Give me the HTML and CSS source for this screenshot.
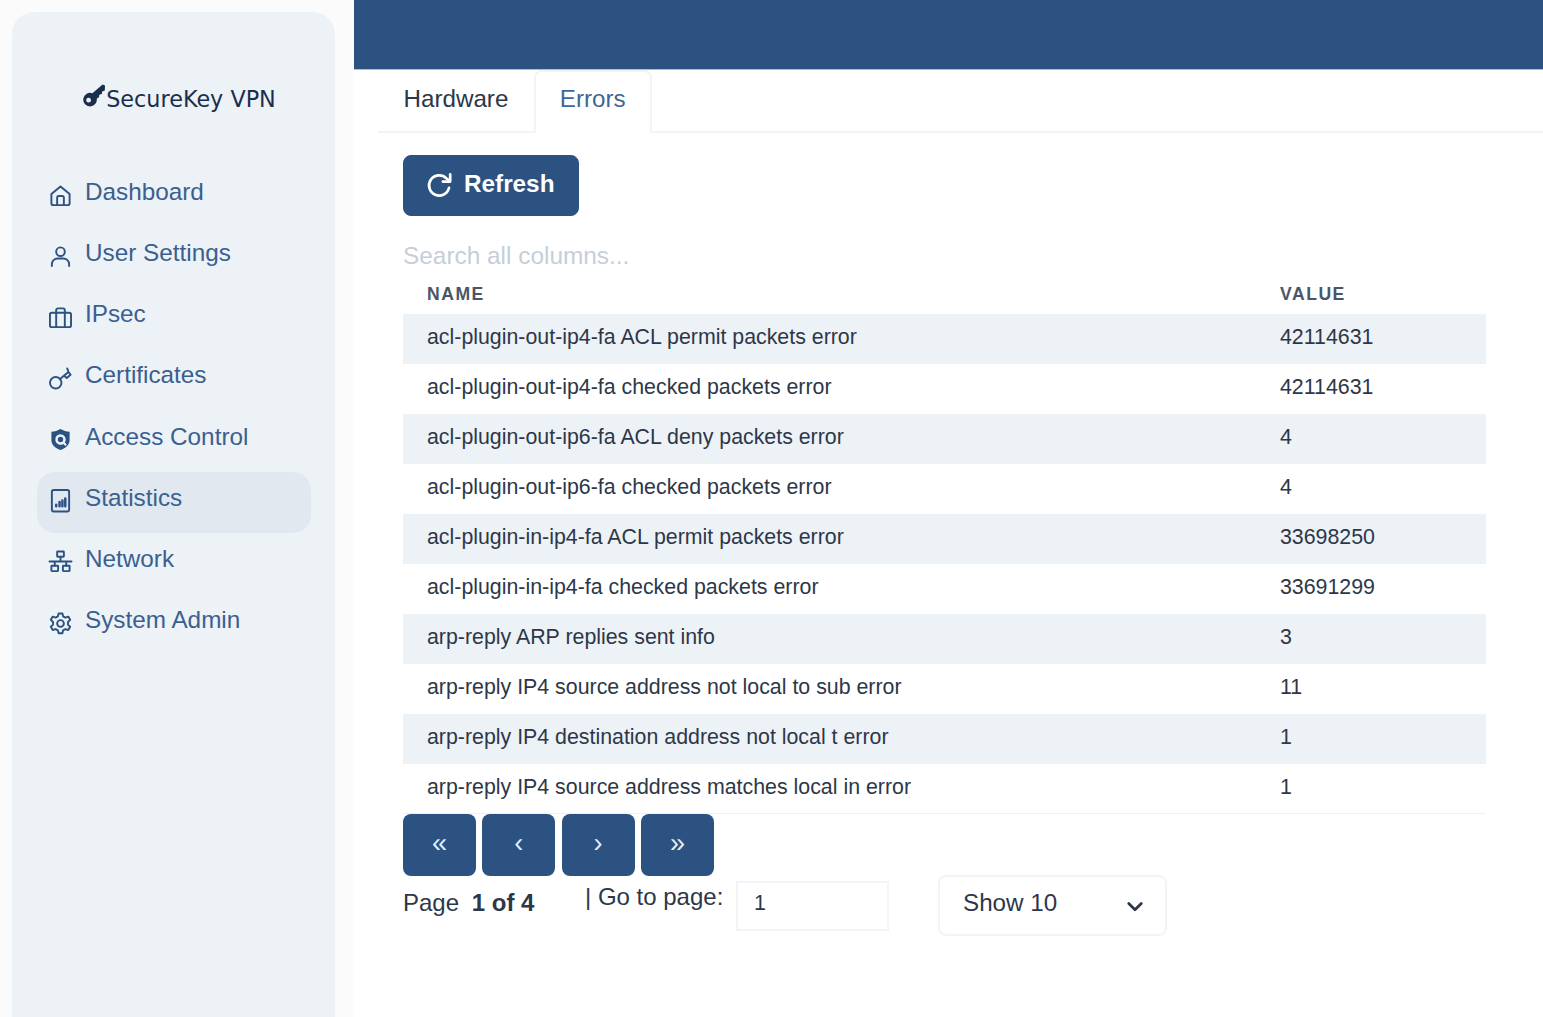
FILE: index.html
```html
<!DOCTYPE html>
<html lang="en">
<head>
    <meta charset="UTF-8">
    <meta name="viewport" content="width=device-width, initial-scale=1.0">
    <title>Statistics - SecureKey VPN</title>
    <link rel="stylesheet" href="styles.css">
</head>
<body>
    <div class="page">
        <div class="sidebar-wrap">
            <aside class="sidebar">
                <div class="logo">
                    <svg class="logo-icon" viewBox="0 0 24 24"><path d="M23 1.500 20.600 .6 10.400 9.200a6.800 6.800 0 1 0 4.400 5.400l2.200-1.300.3-2.600 2.500-.6.4-2.700 2.600-.9zM6.600 18.600a2.400 2.400 0 1 1 0-4.800 2.400 2.400 0 0 1 0 4.800z"/></svg>
                    <span>SecureKey VPN</span>
                </div>
                <nav class="nav">
                    <a class="nav-item" href="#">
                        <svg class="nav-icon" viewBox="0 0 24 24"><path d="M2.500 10.500 12 2.500l9.500 8V20a2 2 0 0 1-2 2h-15a2 2 0 0 1-2-2z"/><path d="M8.500 22v-8a1.500 1.500 0 0 1 1.500-1.500h4a1.500 1.500 0 0 1 1.500 1.500v8"/></svg>
                        <span>Dashboard</span>
                    </a>
                    <a class="nav-item" href="#">
                        <svg class="nav-icon" viewBox="0 0 24 24"><circle cx="12" cy="7" r="4.500"/><path d="M3 22v-2a6 6 0 0 1 6-6h6a6 6 0 0 1 6 6v2"/></svg>
                        <span>User Settings</span>
                    </a>
                    <a class="nav-item" href="#">
                        <svg class="nav-icon" viewBox="0 0 24 24"><rect x="1" y="7" width="22" height="15" rx="2"/><path d="M7.500 22V4.500a2 2 0 0 1 2-2h5a2 2 0 0 1 2 2V22"/></svg>
                        <span>IPsec</span>
                    </a>
                    <a class="nav-item" href="#">
                        <svg class="nav-icon" viewBox="0 0 24 24"><circle cx="7" cy="16.500" r="6"/><path d="M11.500 12.500 20 5.500M16 9.500l2.500 2 4-3.500-2-2.500M19 1.500l1.500 4"/></svg>
                        <span>Certificates</span>
                    </a>
                    <a class="nav-item" href="#">
                        <svg class="nav-icon nav-icon-solid" viewBox="0 0 24 24"><path fill-rule="evenodd" d="M12 1c3 1.800 6 2.600 9.500 2.800v8.700c0 4.800-3.700 8.300-9.500 10.500-5.800-2.200-9.500-5.700-9.500-10.500V3.800C6 3.600 9 2.800 12 1zM12 6.500a5.500 5.500 0 1 0 3 10.100l2.100 2.100 1.500-1.500-2.100-2.100A5.500 5.500 0 0 0 12 6.500zm0 2.700a2.800 2.800 0 1 1 0 5.600 2.800 2.800 0 0 1 0-5.600z"/></svg>
                        <span>Access Control</span>
                    </a>
                    <a class="nav-item nav-item-active" href="#">
                        <svg class="nav-icon" viewBox="0 0 24 24"><rect x="3" y="1" width="18" height="22.500" rx="2"/><path class="bars" d="M7.500 18v-1.500M11 18v-4.500M14 18v-6M17 18v-8"/></svg>
                        <span>Statistics</span>
                    </a>
                    <a class="nav-item" href="#">
                        <svg class="nav-icon" viewBox="0 0 24 24"><rect x="8.500" y="1.500" width="7" height="5.500" rx=".5"/><rect x="2.500" y="16.500" width="7" height="5.500" rx=".5"/><rect x="14.500" y="16.500" width="7" height="5.500" rx=".5"/><path d="M12 7v5M.5 12h23M6 12v4.500M18 12v4.500"/></svg>
                        <span>Network</span>
                    </a>
                    <a class="nav-item" href="#">
                        <svg class="nav-icon" viewBox="0 0 24 24"><circle cx="12" cy="12" r="3.500"/><path d="M10 1.500h4l.7 3 2.400 1.300 3-1 2 3.400-2.300 2.200v2.800l2.300 2.200-2 3.400-3-1-2.400 1.300-.7 3h-4l-.7-3-2.400-1.300-3 1-2-3.400 2.300-2.200v-2.800L1.900 8.200l2-3.400 3 1 2.400-1.300z"/></svg>
                        <span>System Admin</span>
                    </a>
                </nav>
            </aside>
        </div>
        <div class="main">
            <header class="topbar"></header>
            <div class="content">
                <div class="tabs">
                    <div class="tab">Hardware</div>
                    <div class="tab tab-active">Errors</div>
                </div>
                <div class="panel">
                    <button class="refresh" type="button">
                        <svg class="refresh-icon" viewBox="0 0 24 24"><path d="M20.500 14a9 9 0 1 1-2.500-8.500L21 8"/><path d="M21.500 2v6.500H15"/></svg>
                        <span>Refresh</span>
                    </button>
                    <input class="search" type="text" placeholder="Search all columns...">
                    <table class="errors">
                        <thead>
                            <tr><th>Name</th><th class="col-value">Value</th></tr>
                        </thead>
                        <tbody>
                            <tr><td>acl-plugin-out-ip4-fa ACL permit packets error</td><td>42114631</td></tr>
                            <tr><td>acl-plugin-out-ip4-fa checked packets error</td><td>42114631</td></tr>
                            <tr><td>acl-plugin-out-ip6-fa ACL deny packets error</td><td>4</td></tr>
                            <tr><td>acl-plugin-out-ip6-fa checked packets error</td><td>4</td></tr>
                            <tr><td>acl-plugin-in-ip4-fa ACL permit packets error</td><td>33698250</td></tr>
                            <tr><td>acl-plugin-in-ip4-fa checked packets error</td><td>33691299</td></tr>
                            <tr><td>arp-reply ARP replies sent info</td><td>3</td></tr>
                            <tr><td>arp-reply IP4 source address not local to sub error</td><td>11</td></tr>
                            <tr><td>arp-reply IP4 destination address not local t error</td><td>1</td></tr>
                            <tr><td>arp-reply IP4 source address matches local in error</td><td>1</td></tr>
                        </tbody>
                    </table>
                    <div class="pager-buttons">
                        <button class="pager-btn" type="button">«</button>
                        <button class="pager-btn" type="button">‹</button>
                        <button class="pager-btn" type="button">›</button>
                        <button class="pager-btn" type="button">»</button>
                    </div>
                    <div class="pager-row">
                        <div class="page-count">Page <strong>1 of 4</strong></div>
                        <div class="goto">| Go to page:</div>
                        <input class="goto-input" type="text" value="1">
                        <div class="show-select">
                            <span>Show 10</span>
                            <svg class="chevron" viewBox="0 0 16 16"><path d="M3 6l5 5 5-5"/></svg>
                        </div>
                    </div>
                </div>
            </div>
        </div>
    </div>
</body>
</html>
```

FILE: styles.css
```css
* {
    box-sizing: border-box;
}
html, body {
    margin: 0;
    height: 100%;
}
body {
    font-family: "Liberation Sans", Arial, sans-serif;
    color: #2d3748;
    background-color: #ffffff;
    overflow: hidden;
}
.page {
    display: flex;
    height: 1017px;
}
.sidebar-wrap {
    width: 354px;
    flex-shrink: 0;
    padding: 12px 19px 0 12px;
    background-color: #fbfbfb;
}
.sidebar {
    height: 100%;
    padding: 70px 24px 0 25px;
    background-color: #edf2f7;
    border-radius: 22px 22px 0 0;
}
.logo {
    display: flex;
    justify-content: center;
    align-items: flex-start;
    height: 37px;
    margin-bottom: 47px;
    padding-left: 10px;
    font-family: "DejaVu Sans", sans-serif;
    font-size: 22.300px;
    line-height: 35px;
    color: #1a2f4d;
    white-space: nowrap;
}
.logo-icon {
    width: 24px;
    height: 24px;
    margin-top: 2px;
    fill: #1a2f4d;
}
.nav {
    display: flex;
    flex-direction: column;
}
.nav-item {
    display: flex;
    align-items: center;
    gap: 13px;
    height: 61.150px;
    padding: 0 12px;
    color: #3a6090;
    font-size: 24.300px;
    text-decoration: none;
    border-radius: 18px;
}
.nav-item span {
    position: relative;
    top: -4.500px;
}
.nav-item-active {
    background-color: #e2e8f0;
}
.nav-icon {
    width: 23px;
    height: 23px;
    flex-shrink: 0;
    margin-top: -3px;
    fill: none;
    stroke: #2c5282;
    stroke-width: 2;
    stroke-linejoin: round;
    stroke-linecap: round;
    overflow: visible;
}
.nav-icon-solid {
    fill: #2c5282;
    stroke: none;
}
.bars {
    stroke-width: 2.600;
}
.main {
    flex: 1;
    min-width: 0;
    display: flex;
    flex-direction: column;
}
.topbar {
    height: 70px;
    flex-shrink: 0;
    background-color: #2c5282;
    border-bottom: 1px solid #a9c0da;
}
.content {
    flex: 1;
    padding-left: 24px;
}
.tabs {
    display: flex;
    height: 63px;
    border-bottom: 2px solid #f1f4f8;
}
.tab {
    display: flex;
    align-items: center;
    height: 63px;
    padding: 0 25.500px 6px;
    font-size: 24.200px;
    color: #2d3748;
}
.tab-active {
    color: #3f6796;
    background-color: #ffffff;
    border: 2px solid #f1f4f8;
    border-bottom: none;
    border-radius: 8px 8px 0 0;
    padding: 0 24px 8px;
}
.panel {
    padding: 22px 57px 0 25px;
}
.refresh {
    display: flex;
    align-items: center;
    gap: 11px;
    width: 176px;
    height: 61px;
    padding: 0 0 0 22px;
    background-color: #2c5282;
    color: #ffffff;
    border: 1px solid #2c5282;
    border-radius: 8px;
    font-family: inherit;
    font-size: 24.300px;
    font-weight: 700;
}
.refresh span {
    position: relative;
    top: -2px;
}
.refresh-icon {
    width: 27px;
    height: 27px;
    fill: none;
    stroke: #ffffff;
    stroke-width: 2.400;
    stroke-linecap: round;
    stroke-linejoin: round;
}
.search {
    display: block;
    width: 100%;
    height: 67px;
    padding: 13px 0 0;
    border: none;
    outline: none;
    background: transparent;
    font-family: inherit;
    font-size: 24.400px;
}
.search::placeholder {
    color: #c5ced9;
    opacity: 1;
}
.errors {
    width: 100%;
    border-collapse: separate;
    border-spacing: 0;
    table-layout: fixed;
    font-size: 21.350px;
    color: #2d3748;
}
.errors th {
    height: 31px;
    padding: 0 24px 8px;
    text-align: left;
    font-size: 17.600px;
    font-weight: 700;
    letter-spacing: 1.500px;
    text-transform: uppercase;
    color: #4a5568;
}
.errors th.col-value {
    width: 230px;
}
.errors td {
    height: 50px;
    padding: 0 24px 3px;
}
.errors tbody tr:nth-child(odd) {
    background-color: #edf2f7;
}
.errors tbody tr:last-child td {
    border-bottom: 1px solid #edf2f7;
}
.pager-buttons {
    display: flex;
    gap: 6.300px;
}
.pager-btn {
    width: 73px;
    height: 62px;
    padding: 0 0 4px;
    background-color: #2c5282;
    color: #e6edf5;
    border: none;
    border-radius: 8px;
    font-family: inherit;
    font-size: 27px;
}
.pager-row {
    display: flex;
    align-items: flex-start;
    font-size: 24px;
}
.page-count {
    margin-top: 13px;
    width: 182px;
}
.page-count strong {
    margin-left: 6px;
}
.goto {
    margin-top: 7px;
    width: 151px;
    white-space: nowrap;
}
.goto-input {
    width: 153px;
    height: 50px;
    margin-top: 5px;
    padding: 0 16px 5px;
    border: 2px solid #f1f4f8;
    font-family: inherit;
    font-size: 21.350px;
    color: #2d3748;
    outline: none;
}
.show-select {
    display: flex;
    align-items: center;
    justify-content: space-between;
    width: 229px;
    height: 61px;
    margin-left: 49px;
    margin-top: -1px;
    padding: 0 20px 6px 23px;
    border: 2px solid #f1f4f8;
    border-radius: 8px;
    font-size: 24.200px;
}
.chevron {
    width: 20px;
    height: 20px;
    margin-top: 6px;
    fill: none;
    stroke: #2d3748;
    stroke-width: 2.200;
    stroke-linecap: round;
    stroke-linejoin: round;
}
```
